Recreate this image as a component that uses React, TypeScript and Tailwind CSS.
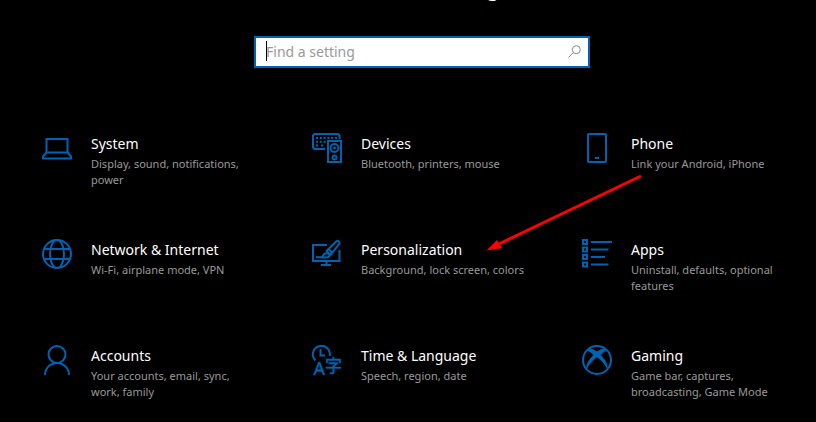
import React from 'react';

const SystemIcon = () => (
  <svg viewBox="0 0 30 30" className="size-[30px]" fill="none" stroke="currentColor" strokeWidth="2">
    <path d="M4.5 19V6h21v13" />
    <path d="M4.5 19.5h21l3.5 4v2H1v-2z" strokeLinejoin="round" />
  </svg>
);

const DevicesIcon = () => (
  <svg viewBox="0 0 30 30" className="size-[30px]" fill="none" stroke="currentColor" strokeWidth="2">
    <path d="M13 16H2.500L1 14.500V2.500L2.500 1H26l1.500 1.500V6" />
    <path d="M4 5h21M4 8.800h10M4 12.500h3M9 12.500h4" strokeDasharray="2 1.800" />
    <path d="M16 8h13v21H16z" />
    <circle cx="22.500" cy="15" r="4" />
    <circle cx="22.500" cy="15" r="1.400" fill="currentColor" stroke="none" />
    <circle cx="22.500" cy="24.500" r="2" />
  </svg>
);

const PhoneIcon = () => (
  <svg viewBox="0 0 30 30" className="size-[30px]" fill="none" stroke="currentColor" strokeWidth="2">
    <rect x="6" y="1" width="18" height="28" rx="1" />
    <path d="M13 25h4" />
  </svg>
);

const NetworkIcon = () => (
  <svg viewBox="0 0 30 30" className="size-[30px]" fill="none" stroke="currentColor" strokeWidth="2">
    <circle cx="15" cy="15" r="14" />
    <ellipse cx="15" cy="15" rx="7" ry="14" />
    <path d="M2.500 10h25M2.500 20h25" />
  </svg>
);

const PersonalizationIcon = () => (
  <svg viewBox="0 0 30 30" className="size-[30px]" fill="none" stroke="currentColor" strokeWidth="2">
    <path d="M15 6H1v16h26.500V11" />
    <path d="M14.500 22v4M9 26h10" />
    <path d="M4 18.300h6c1 0 1-4 4.500-4s4.500 4 0 4.200H9" />
    <path d="M14.500 12L24.500 2.300c1.500-1.300 4 .7 2.700 2.500L18.500 16z" strokeLinejoin="round" />
    <path d="M16 9.500l5 5" />
  </svg>
);

const AppsIcon = () => (
  <svg viewBox="0 0 30 30" className="size-[30px]" fill="none" stroke="currentColor" strokeWidth="2">
    <path d="M1 1h4v4H1zM1 8.500h4v4H1zM1 16h4v4H1zM1 23.500h4v4H1z" />
    <path d="M9 3h21M9 10.500h17.500M9 18h14M9 25.500h17.500" />
  </svg>
);

const AccountsIcon = () => (
  <svg viewBox="0 0 30 30" className="size-[30px]" fill="none" stroke="currentColor" strokeWidth="2">
    <circle cx="15" cy="9.500" r="8.500" />
    <path d="M3 30c0-7 5.400-12 12-12s12 5 12 12" />
  </svg>
);

const TimeLanguageIcon = () => (
  <svg viewBox="0 0 30 30" className="size-[30px] overflow-visible" fill="none" stroke="currentColor" strokeWidth="2">
    <path d="M3.500 15.500A8.500 8.500 0 1 1 17.700 11" />
    <path d="M8.500 4v6.500H13" />
    <text x="1.500" y="30" fontSize="18" fontFamily="'Noto Sans', sans-serif" fill="currentColor" strokeWidth="0.500">A</text>
    <text x="13" y="26.500" fontSize="17" fontFamily="'Noto Sans CJK JP', sans-serif" fill="currentColor" strokeWidth="0.500">字</text>
  </svg>
);

const GamingIcon = () => (
  <svg viewBox="0 0 30 30" className="size-[30px]" fill="none" stroke="currentColor" strokeWidth="2">
    <circle cx="15" cy="15" r="14" />
    <path
      d="M6.500 4c2.500-1 5.500.2 8.500 2.500 3-2.300 6-3.500 8.500-2.500l1.300 2c-2 0-4.300 1.800-6.100 4 4.300 4.200 8 10 7 15.500-1.700-5-6-10-10.700-13.500C10.300 15.500 6 20.500 4.300 25.500c-1-5.500 2.700-11.300 7-15.500C9.500 7.800 7.200 6 5.200 6z"
      fill="currentColor"
      stroke="none"
    />
  </svg>
);

const categories = [
  { title: 'System', desc: 'Display, sound, notifications, power', icon: SystemIcon },
  { title: 'Devices', desc: 'Bluetooth, printers, mouse', icon: DevicesIcon },
  { title: 'Phone', desc: 'Link your Android, iPhone', icon: PhoneIcon },
  { title: 'Network & Internet', desc: 'Wi-Fi, airplane mode, VPN', icon: NetworkIcon },
  { title: 'Personalization', desc: 'Background, lock screen, colors', icon: PersonalizationIcon },
  { title: 'Apps', desc: 'Uninstall, defaults, optional features', icon: AppsIcon },
  { title: 'Accounts', desc: 'Your accounts, email, sync, work, family', icon: AccountsIcon },
  { title: 'Time & Language', desc: 'Speech, region, date', icon: TimeLanguageIcon },
  { title: 'Gaming', desc: 'Game bar, captures, broadcasting, Game Mode', icon: GamingIcon }
];

const App: React.FC = () => {
  return (
    <div className="relative min-h-screen overflow-hidden bg-black font-['Noto_Sans','Open_Sans',sans-serif] text-white">
      <header className="flex flex-col items-center pl-7">
        <h1 className="-mt-[26px] h-7 text-[21px] leading-7">Windows Settings</h1>
        <div className="relative mt-[34px] w-full max-w-[336px]">
          <input
            type="text"
            aria-label="Find a setting"
            placeholder="Find a setting"
            className="block h-8 w-full border-2 border-[#0063b1] bg-white pr-8 pb-0.5 pl-[10px] text-sm text-black outline-none placeholder:text-[#999999]"
          />
          <span className="absolute top-[5px] left-3 h-5 w-px bg-black" />
          <svg viewBox="0 0 13 13" className="absolute top-[9px] right-[9px] size-[13px] text-[#8a8a8a]" fill="none" stroke="currentColor">
            <circle cx="8.300" cy="4.700" r="4" />
            <path d="M5.400 7.600L.5 12.500" />
          </svg>
        </div>
      </header>

      <main className="mt-[65px] grid grid-cols-3 gap-x-9 gap-y-[46px] pl-[42px]">
        {categories.map((item) => (
          <a key={item.title} href="#" className="flex min-h-[60px] items-start gap-[19px]">
            <span className="shrink-0 text-[#0063b1]">
              <item.icon />
            </span>
            <span className="block max-w-[170px]">
              <span className="block text-sm leading-[22px] whitespace-nowrap">{item.title}</span>
              <span className="mt-px block text-[11px] leading-4 text-[#999999]">{item.desc}</span>
            </span>
          </a>
        ))}
      </main>

      <svg viewBox="0 0 160 80" className="pointer-events-none absolute top-[173px] left-[484px] w-40 text-[#ff0000]">
        <path d="M157 3L15 71" stroke="currentColor" strokeWidth="3" />
        <path d="M2.500 77.500L13 67l5 8z" fill="currentColor" />
      </svg>
    </div>
  );
};

export default App;
